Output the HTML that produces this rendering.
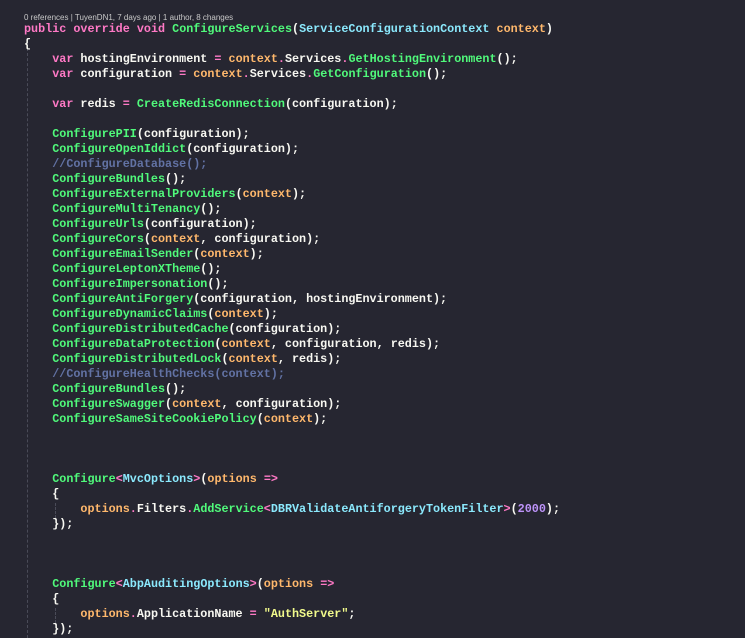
<!DOCTYPE html>
<html><head><style>
html,body{margin:0;padding:0;background:#262631;width:745px;height:638px;overflow:hidden}
.h{position:absolute;left:24px;top:13px;font:8px "Liberation Sans",sans-serif;color:#c8c8c8}
pre{position:absolute;left:24px;top:22px;margin:0;font:bold 11.75px/15px "Liberation Mono",monospace;color:#f8f8f2}
.k{color:#ff79c6}.m{color:#50fa7b}.p{color:#ffb86c}.t{color:#8be9fd}.c{color:#6272a4}.s{color:#f1fa8c}.n{color:#bd93f9}
.g{position:absolute;border-left:1px dashed #4a4b58;width:0}
</style></head><body>
<div class="h">0 references | TuyenDN1, 7 days ago | 1 author, 8 changes</div>
<div class="g" style="left:27px;top:38px;height:600px"></div>
<div class="g" style="left:55px;top:503px;height:15px"></div>
<div class="g" style="left:55px;top:608px;height:15px"></div>
<pre><span class="k">public</span> <span class="k">override</span> <span class="k">void</span> <span class="m">ConfigureServices</span>(<span class="t">ServiceConfigurationContext</span> <span class="p">context</span>)
{
    <span class="k">var</span> hostingEnvironment <span class="k">=</span> <span class="p">context</span><span class="k">.</span>Services<span class="k">.</span><span class="m">GetHostingEnvironment</span>();
    <span class="k">var</span> configuration <span class="k">=</span> <span class="p">context</span><span class="k">.</span>Services<span class="k">.</span><span class="m">GetConfiguration</span>();

    <span class="k">var</span> redis <span class="k">=</span> <span class="m">CreateRedisConnection</span>(configuration);

    <span class="m">ConfigurePII</span>(configuration);
    <span class="m">ConfigureOpenIddict</span>(configuration);
    <span class="c">//ConfigureDatabase();</span>
    <span class="m">ConfigureBundles</span>();
    <span class="m">ConfigureExternalProviders</span>(<span class="p">context</span>);
    <span class="m">ConfigureMultiTenancy</span>();
    <span class="m">ConfigureUrls</span>(configuration);
    <span class="m">ConfigureCors</span>(<span class="p">context</span>, configuration);
    <span class="m">ConfigureEmailSender</span>(<span class="p">context</span>);
    <span class="m">ConfigureLeptonXTheme</span>();
    <span class="m">ConfigureImpersonation</span>();
    <span class="m">ConfigureAntiForgery</span>(configuration, hostingEnvironment);
    <span class="m">ConfigureDynamicClaims</span>(<span class="p">context</span>);
    <span class="m">ConfigureDistributedCache</span>(configuration);
    <span class="m">ConfigureDataProtection</span>(<span class="p">context</span>, configuration, redis);
    <span class="m">ConfigureDistributedLock</span>(<span class="p">context</span>, redis);
    <span class="c">//ConfigureHealthChecks(context);</span>
    <span class="m">ConfigureBundles</span>();
    <span class="m">ConfigureSwagger</span>(<span class="p">context</span>, configuration);
    <span class="m">ConfigureSameSiteCookiePolicy</span>(<span class="p">context</span>);



    <span class="m">Configure</span><span class="k">&lt;</span><span class="t">MvcOptions</span><span class="k">&gt;</span>(<span class="p">options</span> <span class="k">=&gt;</span>
    {
        <span class="p">options</span><span class="k">.</span>Filters<span class="k">.</span><span class="m">AddService</span><span class="k">&lt;</span><span class="t">DBRValidateAntiforgeryTokenFilter</span><span class="k">&gt;</span>(<span class="n">2000</span>);
    });



    <span class="m">Configure</span><span class="k">&lt;</span><span class="t">AbpAuditingOptions</span><span class="k">&gt;</span>(<span class="p">options</span> <span class="k">=&gt;</span>
    {
        <span class="p">options</span><span class="k">.</span>ApplicationName <span class="k">=</span> <span class="s">"AuthServer"</span>;
    });</pre>
</body></html>
